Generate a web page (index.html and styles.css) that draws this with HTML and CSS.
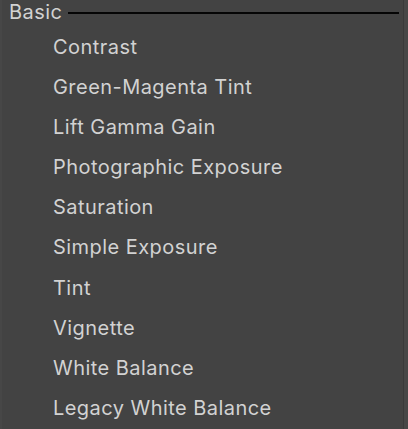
FILE: index.html
```html
<!DOCTYPE html>
<html>
<head>
<meta charset="utf-8">
<link rel="stylesheet" href="styles.css">
</head>
<body>
<div class="panel">
  <div class="group-header">
    <span class="group-title">Basic</span>
    <span class="group-line"></span>
  </div>
  <ul class="items">
    <li>Contrast</li>
    <li>Green-Magenta Tint</li>
    <li>Lift Gamma Gain</li>
    <li>Photographic Exposure</li>
    <li>Saturation</li>
    <li>Simple Exposure</li>
    <li>Tint</li>
    <li>Vignette</li>
    <li>White Balance</li>
    <li>Legacy White Balance</li>
  </ul>
</div>
</body>
</html>
```
FILE: styles.css
```css
html, body {
  margin: 0;
  padding: 0;
  background: #474747;
  width: 408px;
  height: 429px;
  overflow: hidden;
}
.panel {
  margin-left: 2px;
  width: 401px;
  height: 429px;
  background: #434343;
  border-right: 1px solid #3a3a3a;
  font-family: Inter, "Noto Sans", sans-serif;
  color: #d2d2d2;
  letter-spacing: 0.45px;
}
.group-header {
  display: flex;
  align-items: center;
  height: 27px;
  padding-left: 7px;
}
.group-title {
  font-size: 20px;
  line-height: 26px;
  margin-top: -3px;
}
.group-line {
  flex: 1;
  height: 2px;
  background: #050505;
  margin-left: 6px;
  margin-right: 4px;
  margin-top: -2px;
}
.items {
  list-style: none;
  margin: 0;
  padding: 0 0 0 51px;
}
.items li {
  font-size: 20px;
  height: 40.1px;
  line-height: 40px;
}
```
